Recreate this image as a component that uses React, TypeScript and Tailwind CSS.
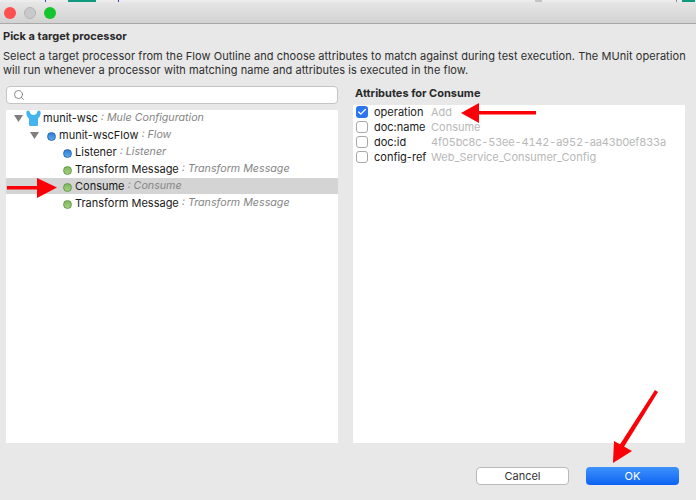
import { Search, Check } from 'lucide-react';

const sans = "font-['Inter','Liberation_Sans',sans-serif]";

const Dot = ({ color }: { color: 'blue' | 'green' }) => (
  <span
    className={
      color === 'blue'
        ? 'block w-[9px] h-[9px] mt-[2px] rounded-full shrink-0 bg-gradient-to-b from-[#2f7fd8] to-[#5aa8ee] border border-[#2a68ad]'
        : 'block w-[9px] h-[9px] mt-[2px] rounded-full shrink-0 bg-gradient-to-b from-[#7fb85c] to-[#a5d080] border border-[#5f9a48]'
    }
  />
);

const Twist = () => (
  <svg width="9" height="7" viewBox="0 0 9 7" className="shrink-0">
    <path d="M0 0h9L4.5 7z" fill="#7f7f7f" />
  </svg>
);

const MuleIcon = () => (
  <svg width="15" height="16" viewBox="0 0 15 16" className="shrink-0">
    <path
      d="M.5 1.500C2-.5 3.500.5 4 2.500c.4 1.500 1.500 2.500 3.500 2.500s3.100-1 3.500-2.500c.5-2 2-3 3.500-1 .6 3-.8 5.500-2.500 7v6c0 1-.6 1.500-1.500 1.500H4.500C3.600 16 3 15.500 3 14.500v-6C1.300 7 -.1 4.500.5 1.500z"
      fill="#42b4ee"
    />
  </svg>
);

const Kind = ({ children }: { children: string }) => (
  <span className="italic text-[#858585] text-[10.7px]">: {children}</span>
);

const TreeRow = ({ name, kind, selected }: { name: string; kind: string; selected?: boolean }) => (
  <div className={`h-4 mb-[1px] flex items-center pl-[57px] ${selected ? 'bg-[#d4d4d4]' : ''}`}>
    <Dot color={name === 'Listener' ? 'blue' : 'green'} />
    <span className="text-[#1a1a1a] ml-[3px] mr-[3px]">{name}</span>
    <Kind>{kind}</Kind>
  </div>
);

const attrs = [
  { name: 'operation', value: 'Add', checked: true },
  { name: 'doc:name', value: 'Consume' },
  { name: 'doc:id', value: '4f05bc8c-53ee-4142-a952-aa43b0ef833a', mono: true },
  { name: 'config-ref', value: 'Web_Service_Consumer_Config' },
];

const App = () => {
  return (
    <div className={`w-[696px] h-[500px] overflow-hidden relative bg-[#e8e8e8] text-[11px] leading-[14px] ${sans}`}>
      {/* strip of the window behind the dialog */}
      <div className="h-[2px] bg-[#ececec] flex">
        <span className="w-[1px] ml-[45px] bg-[#3a3ad0]" />
        <span className="w-[28px] ml-[22px] bg-[#0f9a80]" />
        <span className="w-[1px] ml-[22px] bg-[#3a3ad0]" />
        <span className="w-[7px] ml-[416px] bg-[#c4c4c4]" />
        <span className="w-[1px] ml-[134px] bg-[#8c8c8c]" />
        <span className="w-[13px] ml-[5px] bg-[#0f9a80]" />
      </div>

      <div className="h-[22px] flex items-center gap-[8px] pl-[4px] border-b border-[#a8a8a8] bg-gradient-to-b from-[#e6e6e6] to-[#d2d2d2]">
        <span className="w-3 h-3 rounded-full bg-[#fc4f50]" />
        <span className="w-3 h-3 rounded-full bg-[#c9c9c9] border border-[#b5b5b5]" />
        <span className="w-3 h-3 rounded-full bg-[#14c52d]" />
      </div>

      <div className="pl-[3px] pr-[4px] pt-[5px]">
        <div className="font-bold text-[#2a2a2a] h-[14px]">Pick a target processor</div>
        <p className="mt-[6px] text-[#2e2e2e] leading-[14px] tracking-[0.055px] w-[690px] whitespace-nowrap">
          Select a target processor from the Flow Outline and choose attributes to match against during test execution. The MUnit operation
          <br />
          will run whenever a processor with matching name and attributes is executed in the flow.
        </p>
      </div>

      <div className="flex gap-[15px] pl-[6px] mt-[9px]">
        <div className="w-[332px]">
          <div className="h-[18px] bg-white rounded-[4px] border border-[#c4c4c4] flex items-center pl-[6px] w-[332px]">
            <Search size={12} strokeWidth={1.5} className="text-[#666666]" />
          </div>
          <div className="mt-[6px] h-[333px] bg-white">
            <div className="h-4 mb-[1px] flex items-center pl-[8px]">
              <Twist />
              <span className="ml-[3px]">
                <MuleIcon />
              </span>
              <span className="text-[#1a1a1a] ml-[2px] mr-[3px]">munit-wsc</span>
              <Kind>Mule Configuration</Kind>
            </div>
            <div className="h-4 mb-[1px] flex items-center pl-[24px]">
              <Twist />
              <span className="ml-[8px]">
                <Dot color="blue" />
              </span>
              <span className="text-[#1a1a1a] ml-[3px] mr-[3px]">munit-wscFlow</span>
              <Kind>Flow</Kind>
            </div>
            <TreeRow name="Listener" kind="Listener" />
            <TreeRow name="Transform Message" kind="Transform Message" />
            <TreeRow name="Consume" kind="Consume" selected />
            <TreeRow name="Transform Message" kind="Transform Message" />
          </div>
        </div>

        <div className="w-[332px]">
          <div className="font-bold text-[#2a2a2a] h-[14px] ml-[2px]">Attributes for Consume</div>
          <div className="mt-[5px] h-[338px] bg-white pl-[3px]">
            {attrs.map((a) => (
              <div key={a.name} className="h-[14px] mb-[1px] flex items-center">
                <span
                  className={
                    a.checked
                      ? 'w-3 h-3 rounded-[3px] bg-[#2c75f0] flex items-center justify-center shrink-0'
                      : 'w-3 h-3 rounded-[3px] bg-white border border-[#a8a8a8] shrink-0'
                  }
                >
                  {a.checked && <Check size={10} strokeWidth={3} className="text-white" />}
                </span>
                <span className="w-[57px] ml-[6px] text-[#1a1a1a]">{a.name}</span>
                <span className={a.mono ? 'text-[#b8b8b8] tabular-nums tracking-[-0.2px]' : 'text-[#b8b8b8]'}>{a.value}</span>
              </div>
            ))}
          </div>
        </div>
      </div>

      <div className="flex justify-end gap-[17px] pr-[17px] mt-[24px]">
        <button className="w-[93px] h-[18px] rounded-[4px] bg-white border border-[#b9b9b9] text-[#333333] text-[11px] leading-none">
          Cancel
        </button>
        <button className="w-[93px] h-[18px] rounded-[4px] bg-gradient-to-b from-[#3d92fb] to-[#0b62f2] text-white text-[11px] leading-none">
          OK
        </button>
      </div>

      {/* red callout arrows pasted over the screenshot */}
      <svg className="absolute left-0 top-0 pointer-events-none" width="696" height="500" viewBox="0 0 696 500">
        <g fill="#fb0007" stroke="none">
          <rect x="7" y="186" width="30" height="3.500" />
          <polygon points="37,178 57,187.500 37,198" />
          <rect x="478" y="111" width="58" height="3.500" />
          <polygon points="461,113 479,103 479,123" />
          <polygon points="655,390 658,392 622,450 618,447.500" />
          <polygon points="613,463 614,441 632,451" />
        </g>
      </svg>
    </div>
  );
};

export default App;
